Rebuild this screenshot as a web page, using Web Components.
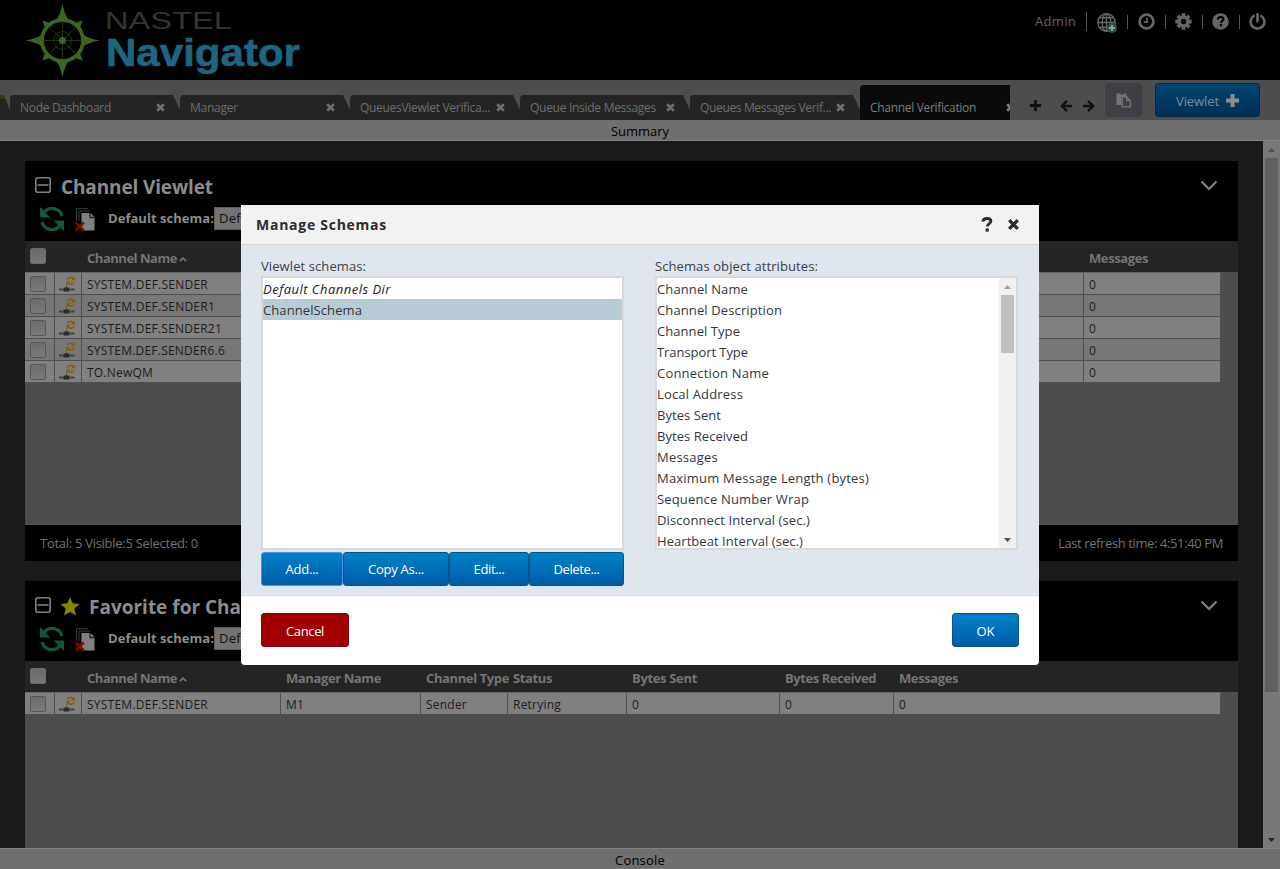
<!DOCTYPE html>
<html lang="en">
<head>
<meta charset="utf-8">
<title>Nastel Navigator</title>
<style>
html,body{margin:0;height:100%;overflow:hidden;background:#1a1a1a}
body{font-family:"Open Sans","Noto Sans",sans-serif;font-size:13px}
</style>
</head>
<body>
<navigator-app></navigator-app>
<script>
const define=(name,render,after)=>customElements.define(name,class extends HTMLElement{
  connectedCallback(){
    if(this.shadowRoot)return;
    this.attachShadow({mode:'open'}).innerHTML=render(this);
    if(after)after(this);
  }
});

/* Text set to a fixed advance width by adjusting its tracking. */
define('fit-text',()=>`<style>:host{display:inline-block;white-space:pre}span{display:inline-block}</style><span><slot></slot></span>`,el=>{
  const w=+el.getAttribute('w'),n=[...el.textContent].length;
  if(!w)return;
  const span=el.shadowRoot.querySelector('span');
  span.style.letterSpacing=((w-span.getBoundingClientRect().width)/n)+'px';
  el.style.width=w+'px';
});

const icons={
  globe:`<svg width="20" height="20" viewBox="0 0 20 20"><g fill="none" stroke="#666" stroke-width="1.4"><circle cx="9.5" cy="9.5" r="8.7"/><ellipse cx="9.5" cy="9.5" rx="4.3" ry="8.7"/><path d="M9.5 .8v17.4M.8 9.5h17.4M2.3 4.8h14.4M2.3 14.2h14.4"/></g><circle cx="15" cy="15" r="5" fill="#14603f"/><path d="M15 12v6M12 15h6" stroke="#999" stroke-width="2"/></svg>`,
  clock:`<svg width="17" height="17" viewBox="0 0 17 17" fill="none" stroke="#666"><circle cx="8.5" cy="8.5" r="6.9" stroke-width="2.8"/><path d="M9 4.6v4.6H5.7" stroke-width="1.7"/></svg>`,
  gear:`<svg width="17" height="17" viewBox="-8.5 -8.5 17 17"><g fill="#666"><rect x="-1.9" y="-8.2" width="3.8" height="16.4" rx=".5"/><rect x="-8.2" y="-1.9" width="16.4" height="3.8" rx=".5"/><g transform="rotate(45)"><rect x="-1.8" y="-8.1" width="3.6" height="16.2" rx=".5"/><rect x="-8.1" y="-1.8" width="16.2" height="3.6" rx=".5"/></g><circle r="6"/></g><circle r="2.7" fill="#000"/></svg>`,
  help:`<svg width="17" height="17" viewBox="0 0 17 17"><circle cx="8.5" cy="8.5" r="8.3" fill="#666"/><path d="M5.8 6.5C6 4.6 7 4 8.6 4c1.7 0 2.8.9 2.8 2.2 0 1.8-2.4 1.9-2.4 3.7" fill="none" stroke="#000" stroke-width="2.1"/><rect x="7.8" y="11.2" width="2.3" height="2.2" fill="#000"/></svg>`,
  power:`<svg width="17" height="17" viewBox="0 0 17 17" fill="none" stroke="#666" stroke-width="2.7" stroke-linecap="round"><path d="M4.600 3a6.900 6.900 0 1 0 7.800 0M8.500 1.300v7"/></svg>`,
  close:`<svg width="9" height="9" viewBox="0 0 9 9"><path d="M1.2 1.2l6.6 6.6M7.8 1.2L1.2 7.8" stroke="currentColor" stroke-width="2.7"/></svg>`,
  plus:`<svg width="11" height="11" viewBox="0 0 11 11"><path d="M5.5 0v11M0 5.5h11" stroke="#111" stroke-width="2.8"/></svg>`,
  left:`<svg width="12" height="12" viewBox="0 0 12 12" fill="none" stroke="#111" stroke-width="2.4"><path d="M7 .9L1.8 6 7 11.1M2 6h10"/></svg>`,
  right:`<svg width="12" height="12" viewBox="0 0 12 12" fill="none" stroke="#111" stroke-width="2.4"><path d="M5 .9L10.2 6 5 11.1M10 6H0"/></svg>`,
  paste:`<svg width="16" height="15" viewBox="0 0 16 15"><path d="M.5.5h4v1h3v-1h3V3H5.500v9H.5z" fill="#74757a"/><path d="M6.200 3.700h4.300l4 4v6.100H6.200z" fill="#3f4045" stroke="#74757a" stroke-width="1.300"/><path d="M10.500 3.700v4h4" fill="none" stroke="#74757a" stroke-width="1.300"/></svg>`,
  minus:`<svg width="16" height="16" viewBox="0 0 16 16" fill="none" stroke="#808080"><rect x=".8" y=".8" width="14.4" height="14.4" rx="2" stroke-width="1.6"/><path d="M2.500 8h11" stroke-width="1.600"/></svg>`,
  star:`<svg width="20" height="19" viewBox="0 0 20 19"><path d="M10 .3l2.700 6 6.900.7-5.200 4.600 1.500 6.900-5.900-3.500-5.900 3.500 1.500-6.900L.4 7l6.900-.7z" fill="#878300"/></svg>`,
  refresh:`<svg width="24" height="24" viewBox="0 0 24 24"><g fill="none" stroke="#12583a" stroke-width="3.200"><path d="M22 9A10.200 10.200 0 0 0 4 5.500M2 15a10.200 10.200 0 0 0 18 3.500"/></g><path d="M0 0v10.500h10.500L6.500 6.700 3.500 3.500zM24 24V13.500H13.500l4 3.800 3 3.200z" fill="#12583a"/></svg>`,
  sheets:`<svg width="20" height="23" viewBox="0 0 20 23"><path d="M1.500 13V.7H13M4 13V3.100H15" fill="none" stroke="#3c3c3c"/><path d="M6.500 5h9l4 4v13.500h-13z" fill="#808080"/><path d="M15 5v4.500h4.500" fill="none" stroke="#222" stroke-width="1.300"/><path d="M.8 14.500l8 8M8.800 14.500l-8 8" stroke="#7d0b00" stroke-width="2.500"/></svg>`,
  chevron:`<svg width="18" height="11" viewBox="0 0 18 11"><path d="M1.500 1.500L9 9l7.500-7.500" fill="none" stroke="#808080" stroke-width="2.200"/></svg>`,
  sort:`<svg width="8" height="5" viewBox="0 0 8 5"><path d="M.8 4.200L4 1.200l3.200 3" fill="none" stroke="#747474" stroke-width="1.600"/></svg>`,
  channel:`<svg width="17" height="17" viewBox="0 0 17 17"><path d="M0 13.500h4M11 13.500h4.500" stroke="#404040" stroke-width="2"/><path d="M3 13.500h9M7.500 8v4" stroke="#555"/><rect x="4.500" y="11.500" width="6" height="4" fill="#2b2b2b"/><g fill="none" stroke="#8a5f0c" stroke-width="1.700"><path d="M8.200 3.600c1-2.600 4.500-3.200 6-.8M15 6c-1 2.500-4.500 3-6 .8"/></g><path d="M16 0v4.500h-4.500zM7.300 9.500V5h4.500z" fill="#8a5f0c"/></svg>`,
  question:`<svg width="12" height="15" viewBox="0 0 12 15"><path d="M1.900 4.600C2.100 2.400 3.600 1.500 5.900 1.500c2.500 0 4 1.100 4 2.800 0 2.500-3.600 2.400-3.600 5.300" fill="none" stroke="#2c2c2c" stroke-width="2.800"/><rect x="4.600" y="11.400" width="3.200" height="3.200" fill="#2c2c2c"/></svg>`,
  dialogclose:`<svg width="11" height="11" viewBox="0 0 11 11"><path d="M1.200 1.200l8.600 8.600M9.800 1.200L1.200 9.800" stroke="#2c2c2c" stroke-width="3.300"/></svg>`,
  bigplus:`<svg width="13" height="13" viewBox="0 0 13 13"><path d="M6.500 0v13M0 6.500h13" stroke="#8a8d90" stroke-width="4"/></svg>`
};
define('ui-icon',el=>`<style>:host{display:inline-flex;flex:none}svg{display:block}</style>${icons[el.getAttribute('name')]}`);

const tick=a=>`<g transform="rotate(${a})"><path d="M-3.500 -21L0 -28.500 3.500 -21z"/></g>`;
const point=a=>`<g transform="rotate(${a})"><path d="M-6.500 -20.500Q-2.500 -24 0 -37 2.500 -24 6.500 -20.500z"/></g>`;
define('brand-logo',()=>`<style>:host{display:block}svg{display:block}</style>
<svg width="310" height="80">
 <g transform="translate(62.500 40.500)" fill="#3b661f">
  <circle r="20.500" fill="none" stroke="#3b661f" stroke-width="3.800"/>
  ${[0,90,180,270].map(point).join('')}${[45,135,225,315].map(tick).join('')}
  <g stroke="#1f3613" fill="none" stroke-width="1"><circle r="9"/><path d="M0-19V19M-19 0H19M-13-13L13 13M13-13L-13 13"/></g>
  <circle r="3.500"/>
 </g>
 <text x="105" y="28.500" font-family="Liberation Sans,sans-serif" font-size="23.500" fill="#333" textLength="127" lengthAdjust="spacingAndGlyphs">NASTEL</text>
 <text x="106" y="66" font-family="Liberation Sans,sans-serif" font-weight="bold" font-size="39" fill="#1c6681" stroke="#1c6681" stroke-width=".6" textLength="194" lengthAdjust="spacingAndGlyphs">Navigator</text>
</svg>`);

define('app-header',()=>`<style>
:host{display:flex;justify-content:space-between;height:80px;background:#000;color:#666}
nav{display:flex;align-items:center;height:42px;padding-right:14px;font-size:13px}
i{width:1px;height:14px;background:#555}
i.tall{height:19px;margin:0 10px}
ui-icon{margin-right:10px}.last{margin-right:0}
i.sep{margin-right:9px;margin-top:2px}
</style><brand-logo></brand-logo>
<nav><fit-text w="41">Admin</fit-text><i class="tall"></i><ui-icon name="globe" style="margin-top:3px"></ui-icon><i class="sep" style="margin-right:10px"></i><ui-icon name="clock"></ui-icon><i class="sep"></i><ui-icon name="gear"></ui-icon><i class="sep"></i><ui-icon name="help"></ui-icon><i class="sep"></i><ui-icon class="last" name="power"></ui-icon></nav>`);

define('dash-tab',()=>`<style>
:host{position:relative;display:flex;align-items:center;flex:none;box-sizing:border-box;width:170px;height:25px;padding:0 0 1px 10px;background:#242424;color:#6d6d6d;font-size:12px;clip-path:polygon(0 0,163px 0,170px 15px,170px 100%,0 100%);border-top-left-radius:4px}
:host([active]){height:35px;padding-top:10px;background:#0a0a0a;color:#7c7c7c;clip-path:none}
ui-icon{position:absolute;left:146px;bottom:8px}
</style><slot></slot><ui-icon name="close"></ui-icon>`);

define('tab-bar',()=>`<style>
:host{display:flex;height:40px;background:#4d4d4d}
.tabs{display:flex;align-items:flex-end;width:1010px;overflow:hidden}
.lead{flex:none;width:10px;height:25px;background:linear-gradient(#254016 4px,#242424 4px);clip-path:polygon(0 0,4px 0,10px 15px,10px 100%,0 100%)}
.tools{display:flex;flex:1;align-items:center}
.tools>ui-icon{margin-top:11px}
.paste{display:flex;align-items:center;justify-content:center;width:37px;height:34px;margin:0 13px 0 10px;border-radius:4px;background:#3f4045}
.view{display:flex;align-items:center;justify-content:space-between;box-sizing:border-box;width:105px;height:34px;padding:1px 20px 0 20px;border:1px solid #02294a;border-radius:3px;background:linear-gradient(#004571,#002f55);color:#808a90}
</style>
<div class="tabs"><span class="lead"></span>
<dash-tab><fit-text w="91">Node Dashboard</fit-text></dash-tab>
<dash-tab><fit-text w="48">Manager</fit-text></dash-tab>
<dash-tab><fit-text w="130">QueuesViewlet Verifica...</fit-text></dash-tab>
<dash-tab><fit-text w="126">Queue Inside Messages</fit-text></dash-tab>
<dash-tab><fit-text w="131">Queues Messages Verif...</fit-text></dash-tab>
<dash-tab active><fit-text w="106">Channel Verification</fit-text></dash-tab></div>
<div class="tools"><ui-icon name="plus" style="margin-left:20px"></ui-icon><ui-icon name="left" style="margin-left:19px"></ui-icon><ui-icon name="right" style="margin-left:11px"></ui-icon><span class="paste"><ui-icon name="paste"></ui-icon></span><span class="view"><fit-text w="43">Viewlet</fit-text><ui-icon name="bigplus"></ui-icon></span></div>`);

define('edge-bar',()=>`<style>
:host{display:flex;align-items:center;justify-content:center;box-sizing:border-box;height:21px;padding-top:2px;background:#6f6f6f;color:#000;border:0 solid #828282}
:host([edge=bottom]){border-bottom-width:1px}:host([edge=top]){border-top-width:1px}
</style><slot></slot>`);

define('scroll-bar',el=>`<style>
:host{display:flex;flex-direction:column;align-items:center;flex:none;width:17px;background:var(--track)}
b{height:17px;display:flex;align-items:center}
div{width:13px;flex:none;height:${el.getAttribute('thumb')}px;background:var(--thumb)}
i{flex:1}
</style><b><svg width="7" height="4"><path d="M0 4L3.500 0 7 4z" fill="var(--up)"/></svg></b><div></div><i></i><b><svg width="7" height="4"><path d="M0 0h7L3.500 4z" fill="var(--down)"/></svg></b>`);

define('check-box',()=>`<style>:host{display:block;box-sizing:border-box;width:16px;height:16px;border:1px solid #575757;border-radius:2px;background:linear-gradient(#6c6c6c,#7b7b7b)}</style>`);

/* cols: "width:label:labelWidth" joined by "|"; rows: "text~width" cells joined by ",". */
define('channel-table',el=>{
  const cols=el.getAttribute('cols').split('|').map(c=>c.split(':'));
  const rows=el.getAttribute('rows').split('|').map(r=>r.split(','));
  const grid='30px 27px '+cols.map(c=>c[0]+'px').join(' ');
  return `<style>
:host{display:block}
.head,.row{display:grid;grid-template-columns:${grid};align-items:center}
.head{height:31px;background:#242424;color:#747474;font-weight:bold;line-height:18px}
.head>span{padding:3px 0 0 5px;white-space:nowrap}
.head check-box{border-color:#6a6a6a;background:linear-gradient(#6a6a6a,#777)}
check-box{margin-left:5px;margin-top:-2px}
.row check-box{margin-top:0}
ui-icon{justify-content:center}
.body{width:1196px;border-top:1px solid #666}
.row{height:22px;font-size:12px;color:#1c1c1c;background:#808080}
.row:nth-child(even){background:#777}
.row>span{box-sizing:border-box;height:22px;display:flex;align-items:center;border-right:1px solid #505050;border-bottom:1px solid #505050;padding:2px 0 0 5px}
.row>.c{padding:0}.row>.i{padding:1px 1px 0 0;justify-content:center}
ui-icon[name=sort]{margin-left:2px;vertical-align:middle}
</style>
<div class="head"><check-box></check-box><span></span>${cols.map((c,i)=>`<span>${c[1]?`<fit-text w="${c[2]}">${c[1]}</fit-text>`:''}${i?'':'<ui-icon name="sort"></ui-icon>'}</span>`).join('')}</div>
<div class="body">${rows.map(r=>`<div class="row"><span class="c"><check-box></check-box></span><span class="i"><ui-icon name="channel"></ui-icon></span>${cols.map((c,i)=>{const [t,w]=(r[i]||'').split('~');return `<span>${t?`<fit-text w="${w}">${t}</fit-text>`:''}</span>`}).join('')}</div>`).join('')}</div>`;
});

define('viewlet-panel',el=>`<style>
:host{display:flex;flex-direction:column;box-sizing:border-box;width:1213px;height:400px;flex:none;background:#4d4d4d}
header{height:80px;box-sizing:border-box;background:#000;color:#8c8c8c;padding:10px 20px 0 10px}
.t,.s{display:flex;align-items:center}
.t{height:32px;font-size:19px;font-weight:bold}
.t>.m{margin-right:10px;margin-top:-4px}
.t>ui-icon[name=star]{margin:-2px 9px 0 -1px}
.t>.v{margin-left:auto;margin-top:-3px}
.s{height:32px;padding-left:5px;font-weight:bold}
.s>ui-icon[name=sheets]{margin:0 13px 0 11px}
.s>fit-text{margin-top:-2px}
.sel{display:flex;align-items:center;box-sizing:border-box;height:23px;width:150px;margin-top:-2px;padding-left:4px;border:1px solid #5b5b5b;background:#737373;color:#111;font-weight:normal}
.f{display:flex;justify-content:space-between;align-items:center;margin-top:auto;height:36px;background:#000;color:#737373;padding:0 15px;box-sizing:border-box}
</style>
<header><div class="t"><ui-icon class="m" name="minus"></ui-icon>${el.hasAttribute('star')?'<ui-icon name="star"></ui-icon>':''}<slot name="title"></slot><ui-icon class="v" name="chevron"></ui-icon></div>
<div class="s"><ui-icon name="refresh"></ui-icon><ui-icon name="sheets"></ui-icon><fit-text w="106">Default schema:</fit-text><span class="sel"><fit-text w="46">Default</fit-text></span></div></header>
<slot></slot>${el.hasAttribute('totals')?`<div class="f"><fit-text w="158">${el.getAttribute('totals')}</fit-text><fit-text w="165">${el.getAttribute('refreshed')}</fit-text></div>`:''}`);

define('push-button',el=>`<style>
:host{display:flex;align-items:center;justify-content:center;box-sizing:border-box;width:${el.getAttribute('width')}px;height:34px;border:1px solid #0b5288;border-radius:3px;background:linear-gradient(#0082c8,#005ca6);color:#fff}
:host([danger]){background:#a20000;border-color:#8a0010}
:host([focus]){border-color:#4b8fe8}
</style><slot></slot>`);

define('list-box',()=>`<style>
:host{display:flex;box-sizing:border-box;width:363px;height:274px;border:2px solid #d9d9d9;background:#fff;overflow:hidden}
.l{flex:1;min-width:0}
</style><div class="l"><slot></slot></div><slot name="bar"></slot>`);
define('list-option',()=>`<style>
:host{display:flex;align-items:center;height:21px;color:#34373b}
:host([selected]){background:#b9ccd5}
</style><slot></slot>`);

const attrs=[['Channel Name',91],['Channel Description',125],['Channel Type',83],['Transport Type',91],['Connection Name',112],['Local Address',86],['Bytes Sent',64],['Bytes Received',91],['Messages',61],['Maximum Message Length (bytes)',212],['Sequence Number Wrap',152],['Disconnect Interval (sec.)',153],['Heartbeat Interval (sec.)',146]];
define('schema-dialog',()=>`<style>
:host{position:absolute;left:241px;top:205px;width:798px;height:460px;display:flex;flex-direction:column;background:#fff;border-radius:0 0 4px 4px;overflow:hidden;color:#3c4046}
header{display:flex;align-items:center;box-sizing:border-box;height:40px;padding:0 20px 0 15px;background:#f2f2f2;border-bottom:1px solid #d9d9d9;color:#2c2c2c;font-weight:bold;font-size:14px}
header ui-icon[name=question]{margin:-1px 15px 0 auto}
main{display:flex;gap:31px;height:351px;box-sizing:border-box;padding:10px 20px;background:#dfe6ee;border-bottom:1px solid #d6dbe0}
section{width:363px}
.lab{display:flex;align-items:center;height:21px}
.btns{display:flex;margin-top:2px}
footer{display:flex;justify-content:space-between;padding:17px 20px}
footer fit-text{padding-top:1px}
</style>
<header><fit-text w="131">Manage Schemas</fit-text><ui-icon name="question"></ui-icon><ui-icon name="dialogclose"></ui-icon></header>
<main><section><div class="lab"><fit-text w="105">Viewlet schemas:</fit-text></div>
<list-box><list-option style="font-style:italic;color:#222"><fit-text w="128">Default Channels Dir</fit-text></list-option><list-option selected><fit-text w="99">ChannelSchema</fit-text></list-option></list-box>
<div class="btns"><push-button focus width="82"><fit-text w="33">Add...</fit-text></push-button><push-button width="106"><fit-text w="56">Copy As...</fit-text></push-button><push-button width="80"><fit-text w="31">Edit...</fit-text></push-button><push-button width="95"><fit-text w="46">Delete...</fit-text></push-button></div></section>
<section><div class="lab"><fit-text w="163">Schemas object attributes:</fit-text></div>
<list-box>${attrs.map(a=>`<list-option><fit-text w="${a[1]}">${a[0]}</fit-text></list-option>`).join('')}<scroll-bar slot="bar" thumb="58" style="--track:#f1f1f1;--thumb:#c1c1c1;--up:#a3a3a3;--down:#505050"></scroll-bar></list-box></section></main>
<footer><push-button danger width="88"><fit-text w="38">Cancel</fit-text></push-button><push-button width="67"><fit-text w="18">OK</fit-text></push-button></footer>`);

define('navigator-app',()=>`<style>
:host{display:flex;flex-direction:column;width:1280px;height:869px;overflow:hidden;position:relative}
.work{display:flex;height:707px;background:#1a1a1a;overflow:hidden}
.panels{flex:1;padding:20px 25px 0;display:flex;flex-direction:column;gap:20px;overflow:hidden;box-sizing:border-box}
</style>
<app-header></app-header><tab-bar></tab-bar>
<edge-bar edge="bottom"><fit-text w="58">Summary</fit-text></edge-bar>
<div class="work"><div class="panels">
<viewlet-panel totals="Total: 5 Visible:5 Selected: 0" refreshed="Last refresh time: 4:51:40 PM"><fit-text slot="title" w="152">Channel Viewlet</fit-text>
<channel-table cols="1002:Channel Name:90|137:Messages:59" rows="SYSTEM.DEF.SENDER~121,0~8|SYSTEM.DEF.SENDER1~128,0~8|SYSTEM.DEF.SENDER21~135,0~8|SYSTEM.DEF.SENDER6.6~138,0~8|TO.NewQM~66,0~8"></channel-table></viewlet-panel>
<viewlet-panel star><fit-text slot="title" w="194">Favorite for Channel</fit-text>
<channel-table cols="199:Channel Name:90|140:Manager Name:95|87:Channel Type:83|119:Status:39|153:Bytes Sent:65|114:Bytes Received:91|327:Messages:59" rows="SYSTEM.DEF.SENDER~121,M1~18,Sender~41,Retrying~48,0~8,0~8,0~8"></channel-table></viewlet-panel>
</div><scroll-bar thumb="534" style="--track:#787878;--thumb:#606060;--up:#515151;--down:#282828"></scroll-bar></div>
<edge-bar edge="top"><fit-text w="50">Console</fit-text></edge-bar>
<schema-dialog></schema-dialog>`);
</script>
</body>
</html>
